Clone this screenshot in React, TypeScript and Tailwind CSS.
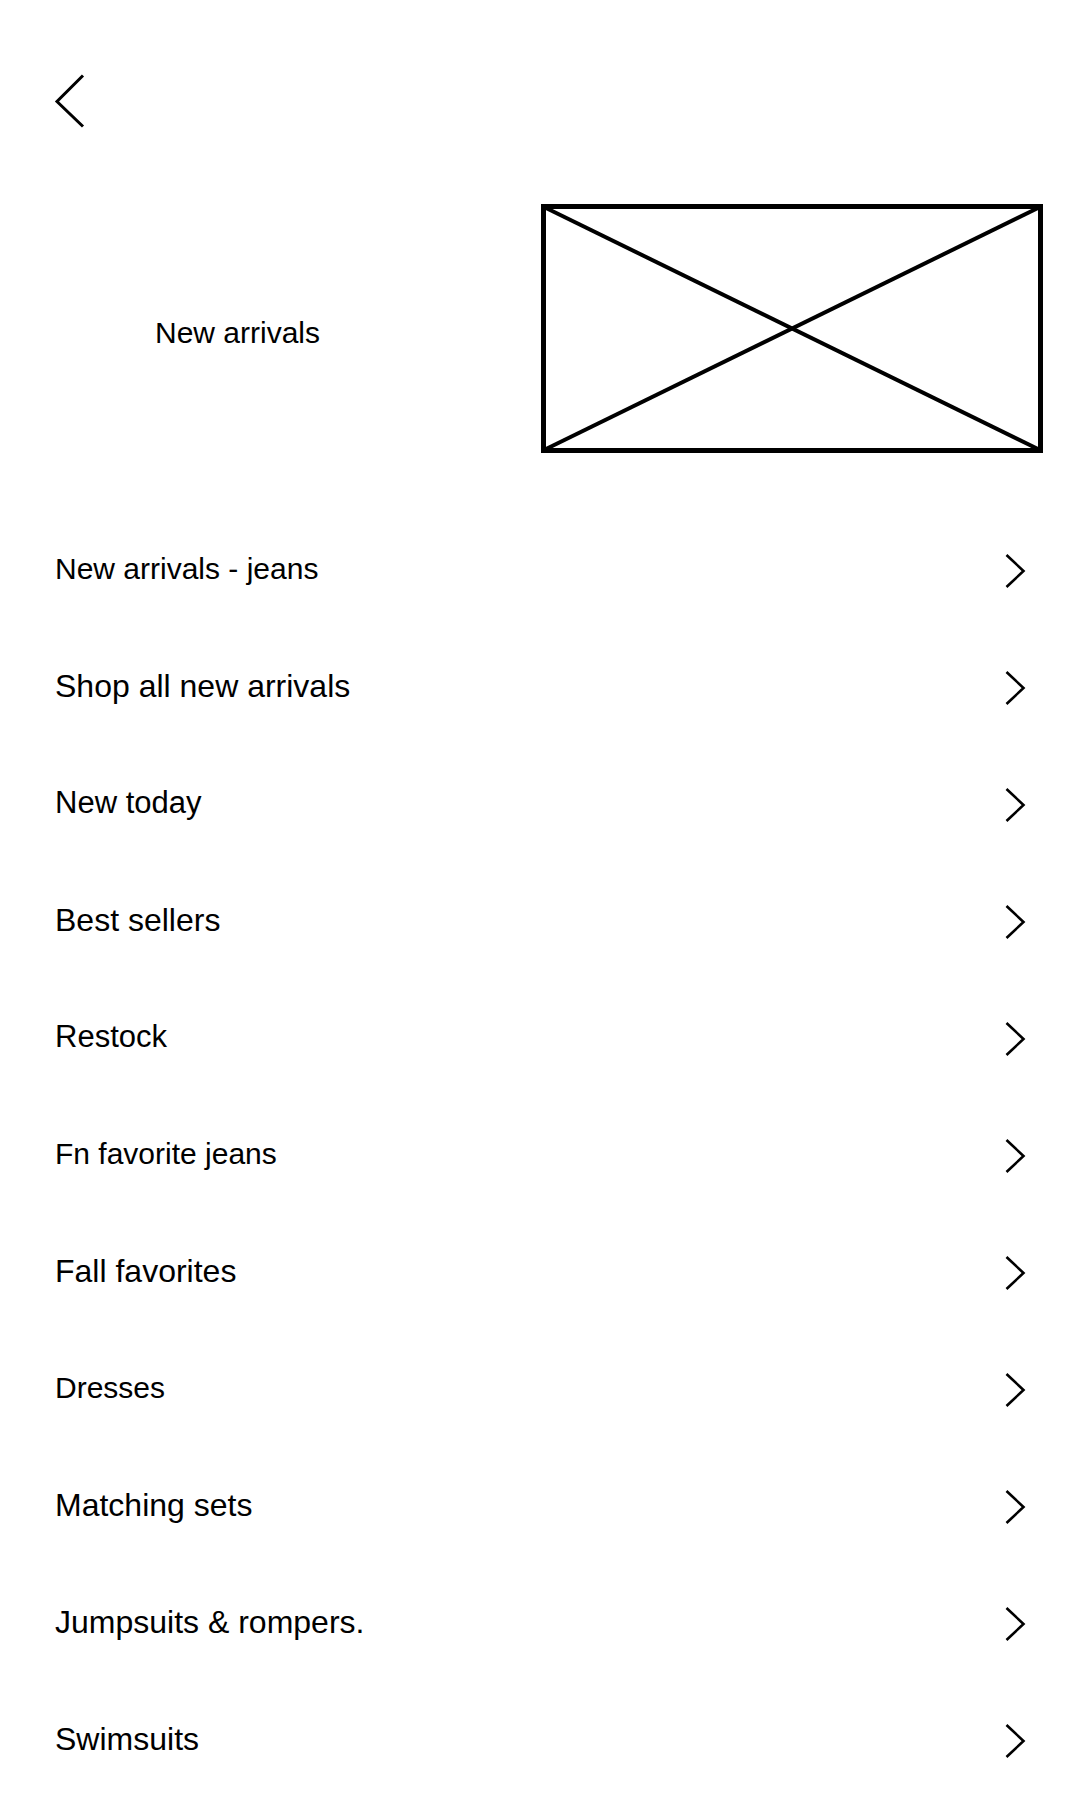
import { ReactNode } from 'react';

// sizes vary a little in the mockup, so each row carries its own
const items = [
  { label: 'New arrivals - jeans', size: 'text-[30px]' },
  { label: 'Shop all new arrivals', size: 'text-[32px]' },
  { label: 'New today', size: 'text-[31px]' },
  { label: 'Best sellers', size: 'text-[32px]' },
  { label: 'Restock', size: 'text-[31px]' },
  { label: 'Fn favorite jeans', size: 'text-[30px]' },
  { label: 'Fall favorites', size: 'text-[32px]' },
  { label: 'Dresses', size: 'text-[30px]' },
  { label: 'Matching sets', size: 'text-[32px]' },
  { label: 'Jumpsuits & rompers.', size: 'text-[32px]' },
  { label: 'Swimsuits', size: 'text-[32px]' },
];

function ChevronLeft() {
  return (
    <svg width="34" height="54" viewBox="0 0 34 54" fill="none" stroke="black" strokeWidth="3">
      <polyline points="30,1.5 4,27.5 30,52.5" />
    </svg>
  );
}

function ChevronRight() {
  return (
    <svg width="22" height="36" viewBox="0 0 22 36" fill="none" stroke="black" strokeWidth="2.6">
      <polyline points="2.5,2 19.5,18 2.5,34" />
    </svg>
  );
}

function ImagePlaceholder() {
  return (
    <svg width="502" height="249" viewBox="0 0 502 249" fill="none" stroke="black">
      <rect x="2.5" y="2.5" width="497" height="244" strokeWidth="5" />
      <line x1="3" y1="3" x2="499" y2="246" strokeWidth="4" />
      <line x1="499" y1="3" x2="3" y2="246" strokeWidth="4" />
    </svg>
  );
}

function Row({ size, children }: { size: string; children: ReactNode }) {
  return (
    <div className="flex h-[117px] items-center justify-between pl-[55px] pr-[54px]">
      <span className={`${size} leading-none`}>{children}</span>
      <div className="pt-[4px]">
        <ChevronRight />
      </div>
    </div>
  );
}

export default function App() {
  return (
    <div className="min-h-screen bg-white text-black font-['Liberation_Sans',Arial,sans-serif]">
      {/* back */}
      <div className="pl-[53px] pt-[74px]">
        <button className="block">
          <ChevronLeft />
        </button>
      </div>

      {/* hero */}
      <div className="mt-[76px] flex h-[249px] items-center">
        <div className="flex w-[475px] justify-center pt-[9px]">
          <span className="text-[30px] leading-none">New arrivals</span>
        </div>
        <div className="ml-[66px]">
          <ImagePlaceholder />
        </div>
      </div>

      {/* category list */}
      <div className="mt-[57px]">
        {items.map((item) => (
          <Row key={item.label} size={item.size}>
            {item.label}
          </Row>
        ))}
      </div>
    </div>
  );
}
